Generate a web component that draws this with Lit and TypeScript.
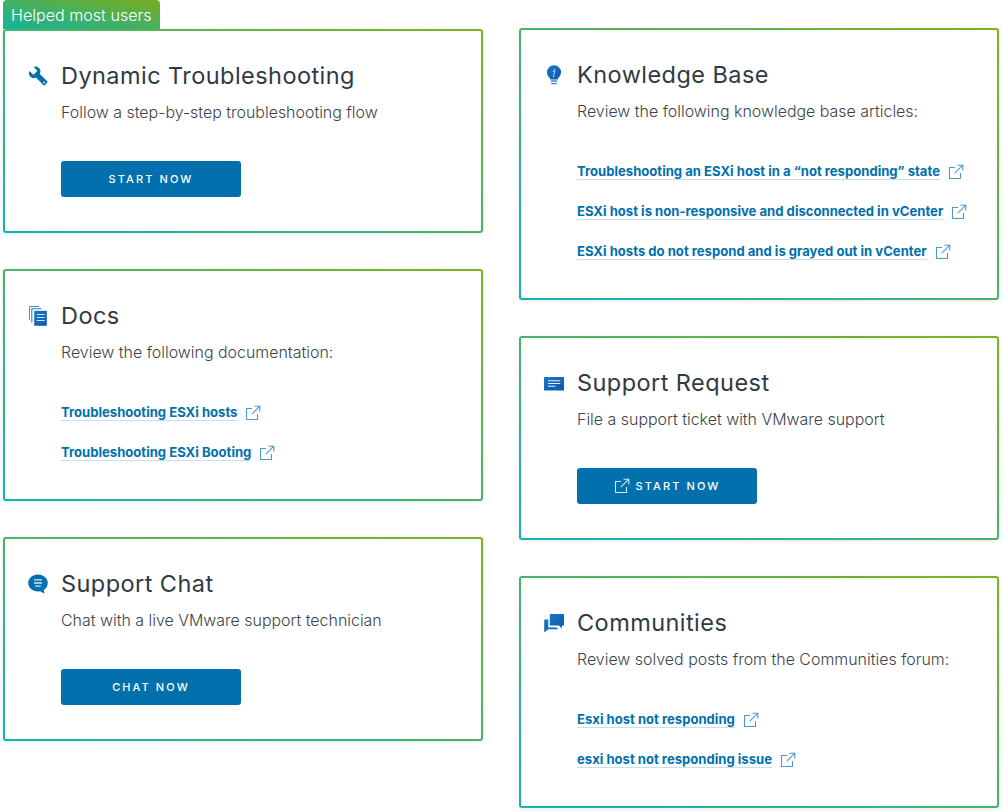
import { LitElement, html, css, svg } from "lit";
import { customElement } from "lit/decorators.js";

const ext = html`<svg class="ext" viewBox="0 0 16 16" fill="none" stroke="currentColor" stroke-width="1.1"><path d="M12.5 9v5.5h-11v-11H7"/><path d="M9.500 1.200h5.300v5.300M14.600 1.400 6.800 9.200"/></svg>`;

const defs = svg`<defs><linearGradient id="bl" x1="0" y1="0" x2="1" y2="1"><stop offset="0" stop-color="#1a78c8"/><stop offset="1" stop-color="#0a58ac"/></linearGradient></defs>`;

const icons: Record<string, unknown> = {
  wrench: html`<svg class="icon" viewBox="0 0 36 36"><path fill="#0170ad" d="M34.600 27.500 21 14a8.400 8.400 0 0 0-10.800-12l5.700 5.700a1.600 1.600 0 0 1 0 2.300l-5 4.900a1.600 1.600 0 0 1-2.300 0L2.900 9.200A8.400 8.400 0 0 0 14.400 20.600L28 34.600a1.400 1.400 0 0 0 2 0l4.600-5.100a1.400 1.400 0 0 0 0-2Z"/><circle cx="29.200" cy="29.400" r="1.700" fill="#fff"/></svg>`,
  docs: html`<svg class="icon" viewBox="0 0 20 20">${defs}<path fill="none" stroke="#3f8fd6" stroke-width="1" d="M1.500 14V.5H11"/><path fill="none" stroke="#2b80cc" stroke-width="1.100" d="M3.800 16.500V2.800H13.500"/><rect x="6.200" y="4.800" width="12.600" height="15" fill="url(#bl)"/><path stroke="#cfe4f5" stroke-width="1.200" d="M8.700 8.500h8M8.700 11.500h8M8.700 14.500h8"/></svg>`,
  bulb: html`<svg class="icon" viewBox="0 0 20 20">${defs}<path fill="url(#bl)" d="M10 .2a7 7 0 0 0-7 7c0 2.400 1 3.800 2.300 5.200.7.800 1 1.300 1 2h7.400c0-.7.300-1.200 1-2C15.900 11 17 9.600 17 7.200a7 7 0 0 0-7-7Z"/><path fill="none" stroke="#d6e8f7" stroke-width=".9" d="m10.900 3.800-1.500 2.800h1.600l-1.300 2.800v3"/><path stroke="#3a8fd8" stroke-width="1.300" d="M6.800 16h6.400M7.300 18.600h5.400"/></svg>`,
  request: html`<svg class="icon" viewBox="0 0 20 20">${defs}<rect x="0" y="4" width="20" height="13.500" rx=".6" fill="url(#bl)"/><path stroke="#e3eff9" stroke-width="1.100" d="M4 7.800h12.200M4 10.500h12.200M4 13.200h7.400"/></svg>`,
  chat: html`<svg class="icon" viewBox="0 0 20 20"><path fill="#0170ad" d="M10 .5C4.500.5.200 4.300.200 9c0 4.700 4.300 8.500 9.800 8.500.9 0 1.400-.1 2.200-.2l4.300 2.400-.8-3.700C18.200 14.400 19.800 12 19.800 9 19.800 4.300 15.500.5 10 .5Z"/><path stroke="#cfe6f2" stroke-width="1.300" d="M6 5.800h8M6 9h8M7.200 12.200h5.600"/></svg>`,
  communities: html`<svg class="icon" viewBox="0 0 20 20">${defs}<path fill="url(#bl)" d="M6.500 1h12.800a.7.7 0 0 1 .7.700v10.200a.7.7 0 0 1-.7.700H18v2.800l-3-2.800H6.500a.7.700 0 0 1-.7-.700V1.700a.7.700 0 0 1 .7-.7Z"/><path fill="url(#bl)" d="M.7 6.500h3.600v8h8.200l1.800 1.800H4.200L.200 19.500V7a.5.500 0 0 1 .5-.5Z"/></svg>`,
};

interface CardData {
  icon: string;
  title: string;
  desc: string;
  links?: string[];
  button?: string;
  buttonExt?: boolean;
  badge?: string;
}

const left: CardData[] = [
  { icon: "wrench", title: "Dynamic Troubleshooting", desc: "Follow a step-by-step troubleshooting flow", button: "START NOW", badge: "Helped most users" },
  { icon: "docs", title: "Docs", desc: "Review the following documentation:", links: ["Troubleshooting ESXi hosts", "Troubleshooting ESXi Booting"] },
  { icon: "chat", title: "Support Chat", desc: "Chat with a live VMware support technician", button: "CHAT NOW" },
];
const right: CardData[] = [
  { icon: "bulb", title: "Knowledge Base", desc: "Review the following knowledge base articles:", links: ["Troubleshooting an ESXi host in a “not responding” state", "ESXi host is non-responsive and disconnected in vCenter", "ESXi hosts do not respond and is grayed out in vCenter"] },
  { icon: "request", title: "Support Request", desc: "File a support ticket with VMware support", button: "START NOW", buttonExt: true },
  { icon: "communities", title: "Communities", desc: "Review solved posts from the Communities forum:", links: ["Esxi host not responding", "esxi host not responding issue"] },
];

@customElement("app-root")
export class AppRoot extends LitElement {
  static styles = css`
    :host {
      display: block;
      font-family: Inter, "Noto Sans", sans-serif;
      color: #3c434a;
      background: #fff;
      height: 812px;
      overflow: hidden;
    }
    .page {
      display: grid;
      grid-template-columns: 480px 480px;
      column-gap: 36px;
      padding-left: 3px;
      align-items: start;
    }
    .col {
      display: flex;
      flex-direction: column;
      gap: 36px;
      padding-top: 28px;
    }
    .col.left {
      padding-top: 29px;
    }
    .card {
      position: relative;
      display: grid;
      grid-template-columns: 20px 1fr;
      column-gap: 13px;
      padding: 29px 24px 34px 23px;
      border: 2px solid transparent;
      border-radius: 3px;
      background: linear-gradient(#fff, #fff) padding-box,
        linear-gradient(to top right, #12b3b8, #7db41c) border-box;
      box-shadow: 0 1px 4px rgba(0, 0, 0, 0.1);
    }
    .badge {
      position: absolute;
      left: -2px;
      top: -31px;
      width: 157px;
      height: 29px;
      box-sizing: border-box;
      padding: 5px 0 0 8px;
      font-size: 16.100px;
      font-weight: 300;
      line-height: 20px;
      color: #fff;
      border-radius: 4px 4px 0 0;
      background: linear-gradient(to top right, #12b3a0, #7aad1e);
    }
    .icon {
      display: block;
      width: 20px;
      height: 20px;
      margin-top: 6px;
    }
    h2 {
      margin: 0 0 9px;
      font-size: 23.500px;
      font-weight: 400;
      line-height: 32px;
      color: #2f3a44;
      letter-spacing: 0.44px;
    }
    p {
      margin: 0;
      font-size: 15.950px;
      font-weight: 300;
      line-height: 24px;
      color: #3c434a;
    }
    .body {
      min-width: 0;
    }
    .links {
      display: flex;
      flex-direction: column;
      gap: 16px;
      margin-top: 36px;
    }
    .row {
      display: flex;
      align-items: center;
      gap: 8px;
      height: 24px;
      color: #0170ad;
    }
    .row a {
      margin-bottom: 2px;
      font-size: 13.100px;
      font-weight: 700;
      line-height: 16px;
      color: #0170ad;
      text-decoration: none;
      border-bottom: 1px solid #c5e1ef;
    }
    .ext {
      width: 16px;
      height: 16px;
      flex: none;
      color: #4a9bc8;
    }
    .btn {
      display: flex;
      align-items: center;
      justify-content: center;
      gap: 6px;
      width: 180px;
      height: 36px;
      margin-top: 36px;
      border-radius: 3px;
      background: #0170ad;
      color: #fff;
      font-size: 11px;
      font-weight: 500;
      letter-spacing: 2.100px;
    }
    .btn .ext {
      color: #d5e8f2;
    }
  `;

  private card(c: CardData) {
    return html`<section class="card">
      ${c.badge ? html`<div class="badge">${c.badge}</div>` : ""}
      ${icons[c.icon]}
      <div class="body">
        <h2>${c.title}</h2>
        <p>${c.desc}</p>
        ${c.links
          ? html`<div class="links">
              ${c.links.map((l) => html`<div class="row"><a>${l}</a>${ext}</div>`)}
            </div>`
          : ""}
        ${c.button
          ? html`<div class="btn">${c.buttonExt ? ext : ""}<span>${c.button}</span></div>`
          : ""}
      </div>
    </section>`;
  }

  render() {
    return html`<div class="page">
      <div class="col left">${left.map((c) => this.card(c))}</div>
      <div class="col">${right.map((c) => this.card(c))}</div>
    </div>`;
  }
}
